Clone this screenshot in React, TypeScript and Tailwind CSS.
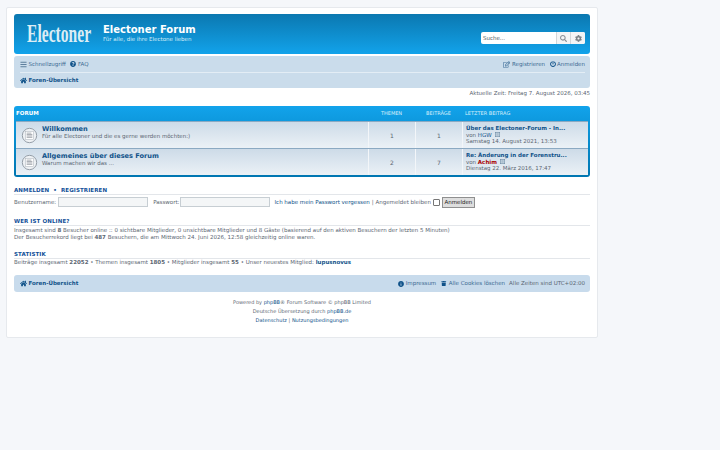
import { FaBars, FaCog, FaHome, FaInfoCircle, FaPowerOff, FaQuestionCircle, FaRegEdit, FaSearch, FaTrash } from "react-icons/fa";

const ForumIcon = () => (
    <svg viewBox="0 0 18 18" className="w-[17px] h-[17px] shrink-0">
        <circle cx="9" cy="9" r="7.6" fill="#eef1f4" stroke="#8f99a3" strokeWidth="1" />
        <rect x="5" y="5" width="8" height="8" fill="#fff" stroke="#a9b0b7" strokeWidth="0.5" />
        <path d="M6 6.5h5M6 8h6M6 9.5h6M6 11h6" stroke="#8d949b" strokeWidth="0.8" />
    </svg>
);

const LastPostIcon = () => (
    <svg viewBox="0 0 8 8" className="inline-block w-[5px] h-[5px] ml-[3px] align-[-0.5px]">
        <rect x="0.5" y="0.5" width="7" height="7" fill="none" stroke="#6b8aa3" strokeWidth="1" />
        <path d="M2 3h4M2 5h4" stroke="#6b8aa3" strokeWidth="1" />
    </svg>
);

interface ForumRowProps {
    title: string;
    desc: string;
    topics: number;
    posts: number;
    last: string;
    author: string;
    red?: boolean;
    date: string;
}

const ForumRow = ({ title, desc, topics, posts, last, author, red, date }: ForumRowProps) => {
    return (
        <div className="flex h-[27px] bg-gradient-to-b from-[#cddbe8] to-[#ebf1f6] border-t border-[#8ba9c2] first:border-t-0">
            <div className="flex-1 flex items-center pl-[5px] gap-[4px]">
                <ForumIcon />
                <div className="self-start pt-[3px]">
                    <div className="text-[6.6px] leading-[8px] font-bold text-[#105289]">{title}</div>
                    <div className="text-[5.5px] leading-[6.5px] text-[#5b6672]">{desc}</div>
                </div>
            </div>
            <div className="w-[47px] border-l border-[#f3f6f9] flex items-center justify-center text-[6px] text-[#5b6672]">{topics}</div>
            <div className="w-[47px] border-l border-[#f3f6f9] flex items-center justify-center text-[6px] text-[#5b6672]">{posts}</div>
            <div className="w-[126px] border-l border-[#f3f6f9] pl-[3px] pt-[3px] text-[5.5px] leading-[6.5px] text-[#5b6672]">
                <div className="font-bold text-[#105289] whitespace-nowrap">{last}</div>
                <div>von <span className={red ? "font-bold text-[#aa0000]" : "text-[#105289]"}>{author}</span><LastPostIcon /></div>
                <div>{date}</div>
            </div>
        </div>
    );
};

const SectionTitle = ({ children }: { children: React.ReactNode }) => (
    <div className="text-[5.5px] leading-[8px] font-bold text-[#115098] border-b border-[#e3e6ea] tracking-[0.1px]">{children}</div>
);

export default function App() {
    return (
        <div className="min-h-[450px] bg-[#f5f7fa] pt-[7px] pl-[6px] font-['DejaVu_Sans',sans-serif] text-[5.5px] text-[#5b6672]">
            <div className="w-[592px] h-[331px] bg-white border border-[#e6e9ed] rounded-[2px] px-[7px] pt-[6px]">
                <div className="h-[40px] rounded-[3px] bg-gradient-to-b from-[#0b78b0] to-[#12a3eb] flex">
                    <div className="w-[75px] pl-[13px] pt-[5px]">
                        <div className="font-['Liberation_Serif',serif] font-bold text-[26px] leading-[30px] text-[#dcedf5] origin-left scale-x-[0.6] whitespace-nowrap">Electoner</div>
                    </div>
                    <div className="pl-[14px] pt-[10px] flex-1">
                        <div className="text-[10px] leading-[12px] font-bold text-white">Electoner Forum</div>
                        <div className="text-[5.5px] leading-[6px] text-[#d6edf9]">Für alle, die ihre Electone lieben</div>
                    </div>
                    <div className="pr-[5px] pt-[18px]">
                        <div className="h-[12px] w-[104px] bg-white rounded-[2px] flex items-center text-[#4f5a62]">
                            <div className="w-[75px] pl-[2px]">Suche...</div>
                            <div className="w-[14px] h-full bg-[#f4f5f6] border-l border-[#d3d6d9] flex items-center justify-center text-[#8a9097]"><FaSearch size={7} /></div>
                            <div className="w-[15px] h-full bg-[#f4f5f6] rounded-r-[2px] border-l border-[#d3d6d9] flex items-center justify-center text-[#7b8288]"><FaCog size={7} /></div>
                        </div>
                    </div>
                </div>
                <div className="mt-[2px] h-[32px] rounded-[3px] bg-[#cadceb] pl-[6px] pr-[5px]">
                    <div className="h-[17px] border-b border-[#e3edf5] flex items-center justify-between">
                        <div className="flex items-center">
                            <FaBars size={7} className="text-[#5e7f9c] mr-[1.5px]" />
                            <span className="text-[#3b6a92]">Schnellzugriff</span>
                            <FaQuestionCircle size={6} className="text-[#105289] ml-[4px] mr-[2px]" />
                            <span className="text-[#3b6a92]">FAQ</span>
                        </div>
                        <div className="flex items-center">
                            <FaRegEdit size={7} className="text-[#3f6f99] mr-[1.5px]" />
                            <span className="text-[#3b6a92]">Registrieren</span>
                            <FaPowerOff size={6} className="text-[#105289] ml-[4.5px] mr-[1.5px]" />
                            <span className="text-[#3b6a92]">Anmelden</span>
                        </div>
                    </div>
                    <div className="h-[15px] flex items-center font-bold text-[#105289]">
                        <FaHome size={7} className="mr-[1.5px]" />Foren-Übersicht
                    </div>
                </div>
                <div className="h-[10px] text-right leading-[10px]">Aktuelle Zeit: Freitag 7. August 2026, 03:45</div>
                <div className="mt-[8px] h-[71px] rounded-[3px] bg-gradient-to-b from-[#12a3eb] to-[#0076b1] px-[2px] pb-[2px]">
                    <div className="flex h-[15px] items-center text-[5px] text-white">
                        <div className="flex-1 font-bold text-[5.5px]">FORUM</div>
                        <div className="w-[47px] text-center text-[#d8eefa]">THEMEN</div>
                        <div className="w-[47px] text-center text-[#d8eefa]">BEITRÄGE</div>
                        <div className="w-[126px] pl-[3px] text-[#d8eefa]">LETZTER BEITRAG</div>
                    </div>
                    <ForumRow title="Willkommen" desc="Für alle Electoner und die es gerne werden möchten:)" topics={1} posts={1} last="Über das Electoner-Forum - In..." author="HGW" date="Samstag 14. August 2021, 13:53" />
                    <ForumRow title="Allgemeines über dieses Forum" desc="Warum machen wir das ..." topics={2} posts={7} last="Re: Änderung in der Forenstru..." author="Achim" red date="Dienstag 22. März 2016, 17:47" />
                </div>
                <div className="mt-[9px]">
                    <SectionTitle>ANMELDEN &nbsp;•&nbsp; REGISTRIEREN</SectionTitle>
                    <div className="mt-[1px] h-[12px] flex items-center">
                        <span>Benutzername:</span>
                        <div className="ml-[2px] w-[90px] h-[10px] bg-[#f4f6f7] border border-[#c7ced3]" />
                        <span className="ml-[5px]">Passwort:</span>
                        <div className="ml-[1px] w-[90px] h-[10px] bg-[#f4f6f7] border border-[#c7ced3]" />
                        <span className="ml-[4px] text-[#105289]">Ich habe mein Passwort vergessen</span>
                        <span className="ml-[2px]">| Angemeldet bleiben</span>
                        <div className="ml-[2px] w-[7px] h-[7px] bg-white border border-[#767676] rounded-[1px]" />
                        <div className="ml-[2px] w-[33px] h-[11px] bg-[#dedede] border border-[#8f8f8f] text-center leading-[9px] text-[#222]">Anmelden</div>
                    </div>
                </div>
                <div className="mt-[9px]">
                    <SectionTitle>WER IST ONLINE?</SectionTitle>
                    <div className="mt-[1px] leading-[7px]">
                        <div>Insgesamt sind <b>8</b> Besucher online :: 0 sichtbare Mitglieder, 0 unsichtbare Mitglieder und 8 Gäste (basierend auf den aktiven Besuchern der letzten 5 Minuten)</div>
                        <div>Der Besucherrekord liegt bei <b>487</b> Besuchern, die am Mittwoch 24. Juni 2026, 12:58 gleichzeitig online waren.</div>
                    </div>
                </div>
                <div className="mt-[9px]">
                    <SectionTitle>STATISTIK</SectionTitle>
                    <div className="leading-[7px]">
                        Beiträge insgesamt <b>22052</b> • Themen insgesamt <b>1805</b> • Mitglieder insgesamt <b>55</b> • Unser neuestes Mitglied: <b className="text-[#105289]">lupusnovus</b>
                    </div>
                </div>
                <div className="mt-[9px] h-[17px] rounded-[3px] bg-[#c8dbec] pl-[6px] pr-[5px] flex items-center justify-between">
                    <div className="flex items-center font-bold text-[#105289]">
                        <FaHome size={7} className="mr-[1.5px]" />Foren-Übersicht
                    </div>
                    <div className="flex items-center">
                        <FaInfoCircle size={6} className="text-[#105289] mr-[2px]" />
                        <span className="text-[#3b6a92]">Impressum</span>
                        <FaTrash size={5.5} className="text-[#105289] ml-[5px] mr-[2px]" />
                        <span className="text-[#3b6a92]">Alle Cookies löschen</span>
                        <span className="ml-[4px]">Alle Zeiten sind UTC+02:00</span>
                    </div>
                </div>
                <div className="mt-[6px] text-center text-[5px] leading-[9px]">
                    <div>Powered by <span className="text-[#105289]">phpBB</span>® Forum Software © phpBB Limited</div>
                    <div>Deutsche Übersetzung durch <span className="text-[#105289]">phpBB.de</span></div>
                    <div><span className="text-[#105289]">Datenschutz</span> | <span className="text-[#105289]">Nutzungsbedingungen</span></div>
                </div>
            </div>
        </div>
    );
}
